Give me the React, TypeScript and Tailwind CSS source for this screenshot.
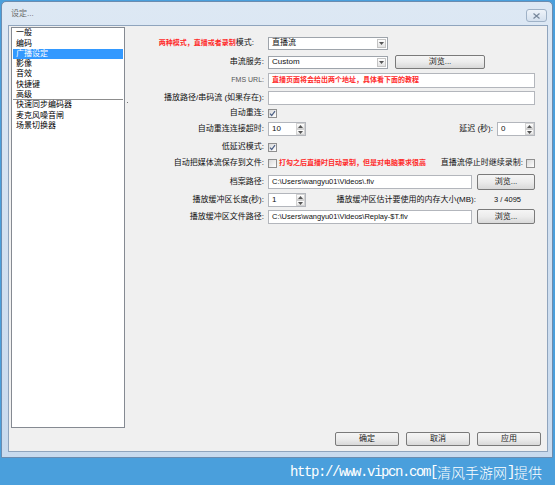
import React from "react";

const listItems = [
  "一般",
  "编码",
  "广播设定",
  "影像",
  "音效",
  "快捷键",
  "高级",
  "快速同步编码器",
  "麦克风噪音闸",
  "场景切换器",
];

const Check = ({ checked }: { checked?: boolean }) => (
  <span className="flex h-[9px] w-[9px] shrink-0 items-center justify-center border border-[#8f8f8f] bg-linear-to-br from-[#d9d9d9] to-white">
    {checked && (
      <svg width="7" height="7" viewBox="0 0 7 7">
        <path d="M1 3.6 L2.7 5.5 L6 1.2" fill="none" stroke="#4b5f84" strokeWidth="1.2" />
      </svg>
    )}
  </span>
);

const Arrow = ({ up }: { up?: boolean }) => (
  <svg width="5" height="3" viewBox="0 0 5 3">
    <path d={up ? "M0 3 L2.5 0 L5 3 Z" : "M0 0 L5 0 L2.5 3 Z"} fill="#555" />
  </svg>
);

const Select = ({ value }: { value: string }) => (
  <div className="flex h-[13px] w-[120px] items-center border border-[#9ea4ab] bg-white pl-[3px] pr-[1px]">
    <span className="flex-1 leading-none">{value}</span>
    <span className="flex h-[9px] w-[9px] items-center justify-center border border-[#c4c4c4] bg-linear-to-b from-white to-[#e2e2e2]">
      <Arrow />
    </span>
  </div>
);

const Btn = ({ children, className }: { children: React.ReactNode; className: string }) => (
  <div
    className={`flex items-center justify-center rounded-[2px] border border-[#7a7a7a] bg-linear-to-b from-[#f5f5f5] via-[#ececec] to-[#d9d9d9] text-[#222] ${className}`}
  >
    {children}
  </div>
);

const TextBox = ({ children, className }: { children?: React.ReactNode; className: string }) => (
  <div className={`flex items-center border border-[#b3b6bc] bg-white pl-[3px] ${className}`}>{children}</div>
);

const Spin = ({ value }: { value: string }) => (
  <div className="flex h-[14px] w-[38px] border border-[#b3b6bc] bg-white">
    <span className="flex-1 pl-[3px] pt-[2px] leading-none">{value}</span>
    <span className="flex w-[9px] flex-col">
      <span className="flex flex-1 items-center justify-center border border-[#d2d2d2] bg-linear-to-b from-white to-[#e6e6e6]">
        <Arrow up />
      </span>
      <span className="flex flex-1 items-center justify-center border border-[#d2d2d2] bg-linear-to-b from-white to-[#e6e6e6]">
        <Arrow />
      </span>
    </span>
  </div>
);

const Row = ({ label, className, children }: { label: React.ReactNode; className: string; children?: React.ReactNode }) => (
  <div className={`flex items-center ${className}`}>
    <div className="w-[139px] shrink-0 text-right whitespace-nowrap">{label}</div>
    <div className="ml-[4px] flex w-[267px] items-center">{children}</div>
  </div>
);

export default function App() {
  return (
    <div className="flex h-[485px] w-[555px] flex-col bg-[#4a9fdc] font-['Liberation_Sans','Noto_Sans_CJK_SC',sans-serif] text-[8px] text-[#111]">
      {/* window */}
      <div className="ml-[1px] mt-[1px] flex h-[457px] w-[552px] flex-col rounded-t-[5px] border border-[#6b8cb0] bg-linear-to-b from-[#dde8f4] to-[#c8daee]">
        <div className="flex h-[23px] items-center justify-between pl-[9px] pr-[5px]">
          <span className="text-[8px] text-[#6a6a6a]">设定...</span>
          <span className="mt-[4px] flex h-[13px] w-[21px] items-center justify-center rounded-[3px] border border-[#9fb2c7] bg-linear-to-b from-[#eef3f9] to-[#d4e0ee]">
            <svg width="7" height="6" viewBox="0 0 7 6">
              <path d="M0.5 0.5 L6.5 5.5 M6.5 0.5 L0.5 5.5" stroke="#76869a" strokeWidth="1.2" />
            </svg>
          </span>
        </div>

        {/* client area */}
        <div className="ml-[6px] mr-[4px] flex h-[427px] flex-col border border-[#8fa4bd] bg-[#f0f0f0]">
          <div className="flex">
            {/* list */}
            <div className="relative ml-[2px] mt-[1px] h-[401px] w-[114px] border border-[#858a92] bg-white">
              {listItems.map((item, i) => (
                <div
                  key={item}
                  className={`mx-[1px] flex h-[10.33px] items-center pl-[3px] ${
                    i === 2 ? "bg-[#3399ff] text-white" : "text-black"
                  } ${i === 6 ? "border-b border-[#8d8d8d]" : ""}`}
                >
                  {item}
                </div>
              ))}
              <span className="absolute left-[115px] top-[74px] h-[1px] w-[1px] bg-[#777]" />
            </div>

            {/* form */}
            <div className="flex flex-col pt-[8px]">
              <Row
                className="h-[18px]"
                label={
                  <span className="pr-[10px]">
                    <span className="text-[7px] font-bold text-[#ff2a2a]">两种模式，直播或者录制</span>模式:
                  </span>
                }
              >
                <Select value="直播流" />
              </Row>
              <Row className="h-[20px]" label="串流服务:">
                <Select value="Custom" />
                <Btn className="ml-[7px] h-[14px] w-[90px]">浏览...</Btn>
              </Row>
              <Row className="h-[16px]" label={<span className="text-[7px] text-[#555]">FMS URL:</span>}>
                <TextBox className="h-[15px] w-[267px]">
                  <span className="text-[7px] font-bold text-[#ff2a2a]">直播页面将会给出两个地址，具体看下面的教程</span>
                </TextBox>
              </Row>
              <Row className="h-[19px]" label="播放路径/串码流 (如果存在):">
                <TextBox className="h-[14px] w-[267px]" />
              </Row>
              <Row className="h-[12px]" label="自动重连:">
                <Check checked />
              </Row>
              <Row className="h-[20px]" label="自动重连连接超时:">
                <Spin value="10" />
                <span className="ml-auto mr-[4px]">延迟 (秒):</span>
                <Spin value="0" />
              </Row>
              <Row className="h-[16px]" label="低延迟模式:">
                <Check checked />
              </Row>
              <Row className="h-[16px]" label="自动把媒体流保存到文件:">
                <Check />
                <span className="ml-[2px] text-[7px] font-bold text-[#ff2a2a]">打勾之后直播时自动录制，但是对电脑要求很高</span>
                <span className="ml-auto mr-[3px]">直播流停止时继续录制:</span>
                <Check />
              </Row>
              <Row className="h-[21px]" label="档案路径:">
                <TextBox className="h-[14px] w-[204px] text-[7.5px]">C:\Users\wangyu01\Videos\.flv</TextBox>
                <Btn className="ml-auto h-[16px] w-[58px]">浏览...</Btn>
              </Row>
              <Row className="h-[16px]" label="播放缓冲区长度(秒):">
                <Spin value="1" />
                <span className="ml-auto">播放缓冲区估计要使用的内存大小(MB):</span>
                <span className="ml-[1px] w-[58px] pl-[3px] text-center text-[7.5px]">3 / 4095</span>
              </Row>
              <Row className="h-[17px]" label="播放缓冲区文件路径:">
                <TextBox className="h-[14px] w-[204px] text-[7.5px]">C:\Users\wangyu01\Videos\Replay-$T.flv</TextBox>
                <Btn className="ml-auto h-[15px] w-[58px]">浏览...</Btn>
              </Row>
            </div>
          </div>

          {/* bottom buttons */}
          <div className="mt-[4px] flex justify-end gap-[7px] pr-[6px]">
            <Btn className="h-[14px] w-[64px]">确定</Btn>
            <Btn className="h-[14px] w-[64px]">取消</Btn>
            <Btn className="h-[14px] w-[64px]">应用</Btn>
          </div>
        </div>
      </div>

      {/* watermark bar */}
      <div className="flex flex-1 items-center justify-end pr-[13px] pt-[2px] text-[14px] text-white">
        <span className="font-['Liberation_Mono',monospace] tracking-[-1.4px]">http://www.vipcn.com[</span>
        <span className="font-['Noto_Sans_CJK_SC',sans-serif] font-light">清风手游网</span>
        <span className="font-['Liberation_Mono',monospace] tracking-[-1.4px]">]</span>
        <span className="font-['Noto_Sans_CJK_SC',sans-serif] font-light">提供</span>
      </div>
    </div>
  );
}
